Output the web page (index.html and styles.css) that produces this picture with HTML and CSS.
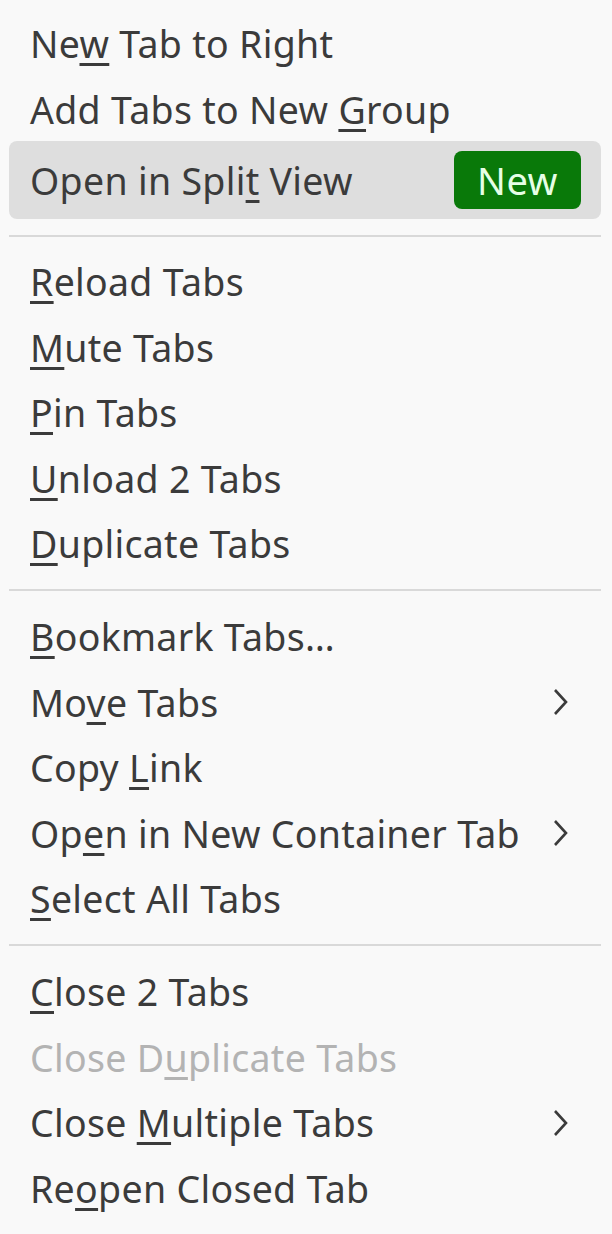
FILE: index.html
```html
<!DOCTYPE html>
<html>
<head>
<meta charset="utf-8">
<link rel="stylesheet" href="styles.css">
</head>
<body>
<div class="menu">
  <div class="item"><span>Ne<u>w</u> Tab to Right</span></div>
  <div class="item"><span>Add Tabs to New <u>G</u>roup</span></div>
  <div class="item split"><span>Open in Spli<u>t</u> View</span><span class="badge">New</span></div>
  <div class="sep sep1"></div>
  <div class="item"><span><u>R</u>eload Tabs</span></div>
  <div class="item"><span><u>M</u>ute Tabs</span></div>
  <div class="item"><span><u>P</u>in Tabs</span></div>
  <div class="item"><span><u>U</u>nload 2 Tabs</span></div>
  <div class="item"><span><u>D</u>uplicate Tabs</span></div>
  <div class="sep"></div>
  <div class="item"><span><u>B</u>ookmark Tabs…</span></div>
  <div class="item"><span>Mo<u>v</u>e Tabs</span><svg class="chev" viewBox="0 0 16 28"><path d="M2 2 L13 14 L2 26"/></svg></div>
  <div class="item"><span>Copy <u>L</u>ink</span></div>
  <div class="item"><span>Op<u>e</u>n in New Container Tab</span><svg class="chev" viewBox="0 0 16 28"><path d="M2 2 L13 14 L2 26"/></svg></div>
  <div class="item"><span><u>S</u>elect All Tabs</span></div>
  <div class="sep"></div>
  <div class="item"><span><u>C</u>lose 2 Tabs</span></div>
  <div class="item disabled"><span>Close D<u>u</u>plicate Tabs</span></div>
  <div class="item"><span>Close <u>M</u>ultiple Tabs</span><svg class="chev" viewBox="0 0 16 28"><path d="M2 2 L13 14 L2 26"/></svg></div>
  <div class="item"><span>Re<u>o</u>pen Closed Tab</span></div>
</div>
</body>
</html>
```
FILE: styles.css
```css
html, body {
  margin: 0;
  padding: 0;
  background: #f9f9f9;
}
.menu {
  width: 612px;
  height: 1234px;
  box-sizing: border-box;
  padding: 11px 11px 0 9px;
  display: flex;
  flex-direction: column;
  font-family: "Noto Sans", sans-serif;
  font-size: 37.5px;
  letter-spacing: 0.3px;
  color: #3b3b3b;
  background: #f9f9f9;
}
.item {
  height: 65.5px;
  flex: none;
  display: flex;
  align-items: center;
  justify-content: space-between;
  padding: 0 32px 0 21px;
  white-space: nowrap;
}
.item u {
  text-decoration-thickness: 2.5px;
  text-underline-offset: 5px;
}
.split {
  height: 78px;
  margin-top: -1px;
  background: #dedede;
  border-radius: 8px;
  padding-right: 20px;
}
.badge {
  background: #097909;
  color: #e6ffe6;
  border-radius: 8px;
  height: 58px;
  width: 127px;
  display: flex;
  align-items: center;
  justify-content: center;
  font-size: 38px;
  letter-spacing: 0.5px;
}
.sep {
  height: 2px;
  flex: none;
  background: #d9d9d9;
  margin: 12.5px 0 13px;
}
.sep1 {
  margin: 16px 0 12px;
}
.disabled {
  color: #b3b3b3;
}
.chev {
  width: 16px;
  height: 28px;
  fill: none;
  stroke: #3b3b3b;
  stroke-width: 2.6;
}
```
